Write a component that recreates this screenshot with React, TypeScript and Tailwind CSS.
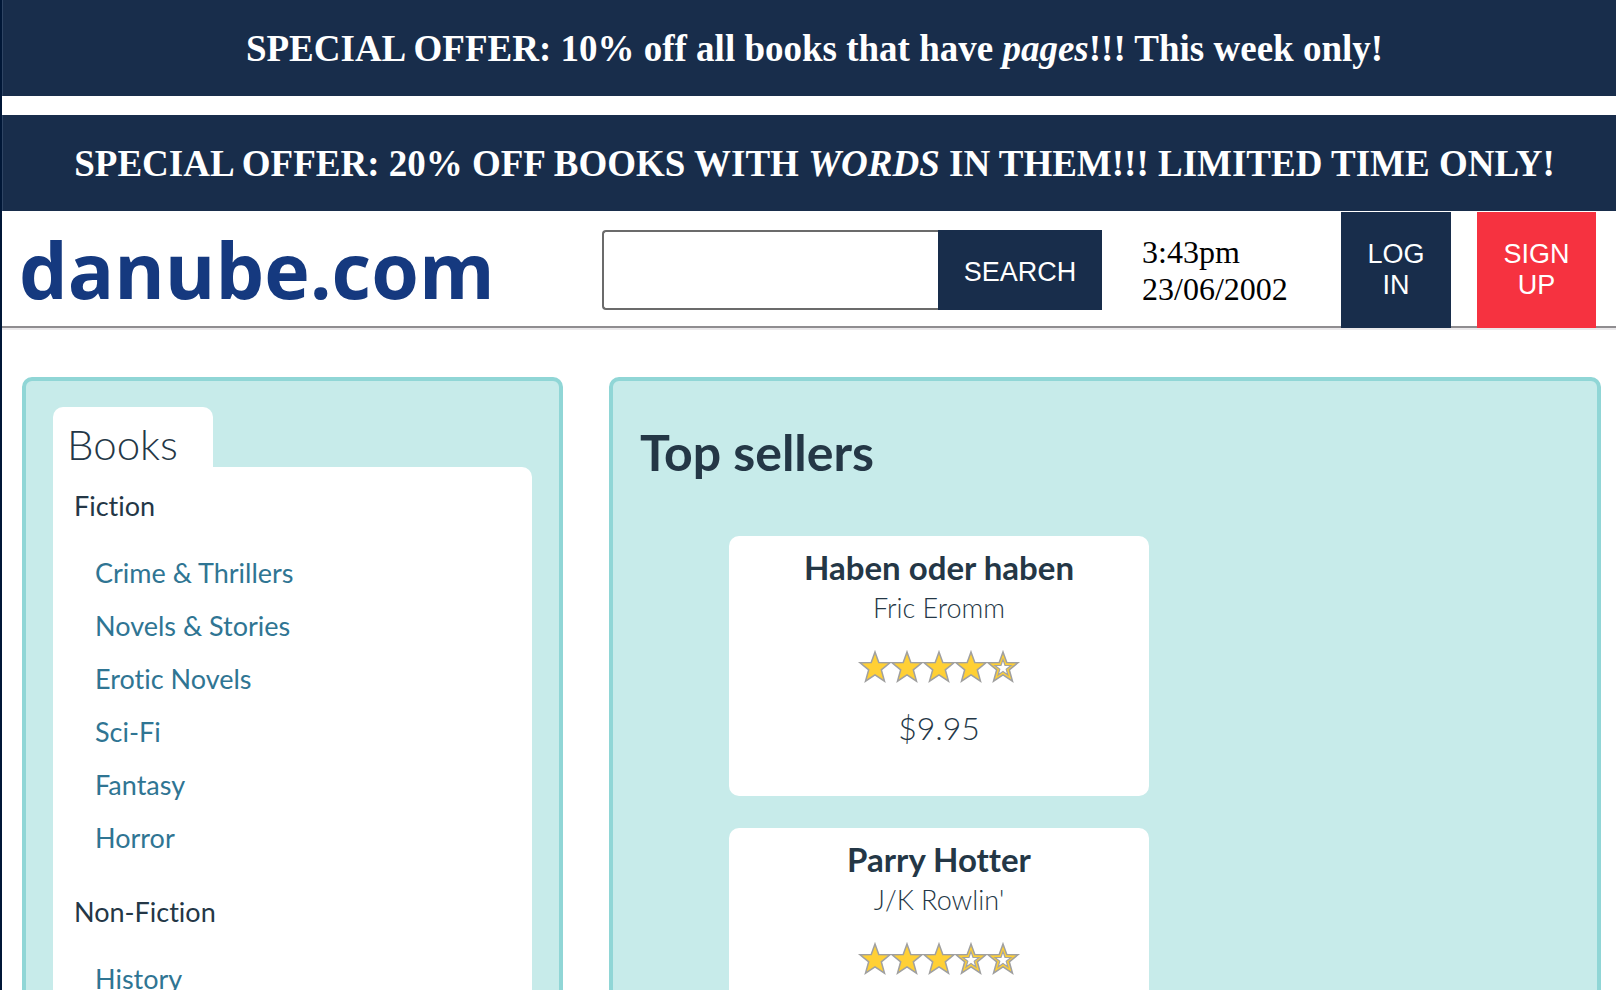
import React from "react";

const STAR =
  "M17 2 L20.8 12.5 L32 12.8 L23.3 19.8 L26.5 31.2 L17 24.9 L7.5 31.2 L10.7 19.8 L2 12.8 L13.2 12.5 Z";
const STAR_CORE =
  "M17 9.6 L19 15.3 L25 15.5 L20.2 19.2 L21.9 25 L17 21.6 L12.1 25 L13.8 19.2 L9 15.5 L15 15.3 Z";

function Star({ filled }: { filled: boolean }) {
  return (
    <svg viewBox="1 0 32 34" className="h-[34px] w-8 overflow-visible" aria-hidden="true">
      <path d={STAR} fill="#ffd035" stroke="#a0a0a0" strokeWidth="1.5" />
      {!filled && <path d={STAR_CORE} fill="#ffffff" stroke="#a3a3a3" strokeWidth="1.2" />}
    </svg>
  );
}

function Banner({ children }: { children: React.ReactNode }) {
  return (
    <h2 className="flex h-24 items-center justify-center border-l border-[#2f4564] bg-[#182d4b] pt-0.5 pl-2.5 font-['Liberation_Serif',serif] text-[37px] leading-[42px] font-bold whitespace-nowrap text-white">
      <span>{children}</span>
    </h2>
  );
}

const sections = [
  {
    name: "Fiction",
    links: [
      "Crime & Thrillers",
      "Novels & Stories",
      "Erotic Novels",
      "Sci-Fi",
      "Fantasy",
      "Horror",
    ],
  },
  { name: "Non-Fiction", links: ["History"] },
];

type Book = { title: string; author: string; rating: number; price?: string };

const books: Book[] = [
  { title: "Haben oder haben", author: "Fric Eromm", rating: 4, price: "$9.95" },
  { title: "Parry Hotter", author: "J/K Rowlin'", rating: 3 },
];

function BookCard({ title, author, rating, price }: Book) {
  return (
    <li className="flex min-h-[260px] w-[420px] flex-col items-center rounded-[10px] bg-white pt-3">
      <h3 className="text-[33px] leading-[38px] font-bold">{title}</h3>
      <p className="text-[27px] leading-[44px] font-light">{author}</p>
      <div className="mt-5 flex" role="img" aria-label={`${rating} out of 5 stars`}>
        {[1, 2, 3, 4, 5].map((n) => (
          <Star key={n} filled={n <= rating} />
        ))}
      </div>
      {price && <p className="mt-6 text-[32px] leading-10 font-light">{price}</p>}
    </li>
  );
}

export default function App() {
  return (
    <div className="h-screen overflow-hidden border-l-2 border-[#001737] bg-white font-['Lato',sans-serif] text-[#243746] [font-variant-ligatures:none]">
      <div className="flex flex-col gap-[19px]">
        <Banner>
          SPECIAL OFFER: 10% off all books that have <em>pages</em>!!! This week only!
        </Banner>
        <Banner>
          SPECIAL OFFER: 20% OFF BOOKS WITH <em>WORDS</em> IN THEM!!! LIMITED TIME ONLY!
        </Banner>
      </div>

      <header className="flex items-start border-b-2 border-[#8f8d90] pr-5 pl-[17px] shadow-[0_2px_0_#ebe9eb]">
        <a
          href="#home"
          className="mt-[7px] mr-auto font-['Open_Sans',sans-serif] text-[77px] leading-[104px] font-bold text-[#15397f]"
        >
          danube.com
        </a>
        <form className="mt-[19px] flex h-20" onSubmit={(e) => e.preventDefault()}>
          <input
            type="text"
            aria-label="Search books"
            className="w-[336px] rounded-l-[4px] border-2 border-r-0 border-[#6b6b6b] bg-white px-3 font-['Liberation_Sans',sans-serif] text-[27px] outline-none"
          />
          <button
            type="submit"
            className="w-[164px] bg-[#182d4b] pt-1 font-['Liberation_Sans',sans-serif] text-[27px] leading-[31px] text-white"
          >
            SEARCH
          </button>
        </form>
        <p className="mt-[23px] ml-10 w-[199px] font-['Liberation_Serif',serif] text-[32px] leading-[37px] text-black">
          3:43pm
          <br />
          23/06/2002
        </p>
        <div className="mt-px -mb-0.5 flex h-[116px] gap-[26px] font-['Liberation_Sans',sans-serif] text-[27px] leading-[31px] text-white">
          <button type="button" className="w-[110px] bg-[#182d4b] px-6">
            LOG IN
          </button>
          <button type="button" className="w-[119px] bg-[#f63240] px-6">
            SIGN UP
          </button>
        </div>
      </header>

      <div className="mt-[49px] grid grid-cols-[541fr_992fr] items-start gap-x-[46px] pr-[15px] pl-5">
        <nav className="rounded-[10px] border-4 border-[#90d6d6] bg-[#c7ebea] px-[27px] py-[26px]">
          <h2 className="h-[60px] w-40 rounded-t-[10px] bg-white pt-3 pl-3.5 text-[42px] leading-[50px] font-light">
            Books
          </h2>
          <div className="flex flex-col gap-[29px] rounded-[10px] rounded-tl-none bg-white px-[21px] pt-5 pb-10 text-[27px]">
            {sections.map((section) => (
              <section key={section.name}>
                <h3 className="leading-[37px]">{section.name}</h3>
                <ul className="mt-[22px] flex flex-col pl-[21px] text-[#2f7593]">
                  {section.links.map((link) => (
                    <li key={link} className="leading-[53px]">
                      <a href="#category">{link}</a>
                    </li>
                  ))}
                </ul>
              </section>
            ))}
          </div>
        </nav>

        <main className="rounded-[10px] border-4 border-[#90d6d6] bg-[#c7ebea] px-[27px] pt-[38px] pb-8">
          <h1 className="text-[50px] leading-[66px] font-bold">Top sellers</h1>
          <ul className="mt-[51px] ml-[89px] flex flex-col gap-8">
            {books.map((book) => (
              <BookCard key={book.title} {...book} />
            ))}
          </ul>
        </main>
      </div>
    </div>
  );
}
